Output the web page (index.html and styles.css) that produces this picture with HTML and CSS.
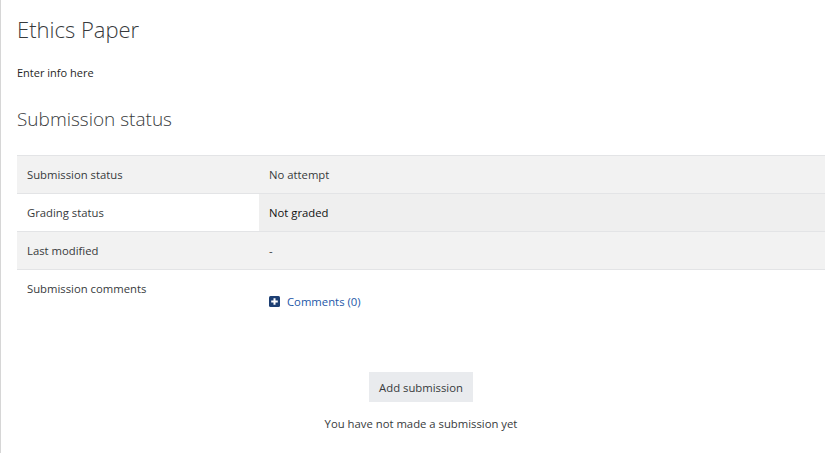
FILE: index.html
```html
<!DOCTYPE html>
<html>
<head>
<meta charset="utf-8">
<link rel="stylesheet" href="styles.css">
</head>
<body>
<div class="page">
  <h2 class="title">Ethics Paper</h2>
  <p class="intro">Enter info here</p>
  <h3 class="heading">Submission status</h3>
  <table class="status">
    <tr class="shade">
      <td class="label">Submission status</td>
      <td class="value">No attempt</td>
    </tr>
    <tr>
      <td class="label white">Grading status</td>
      <td class="value grey dark">Not graded</td>
    </tr>
    <tr class="shade">
      <td class="label">Last modified</td>
      <td class="value">-</td>
    </tr>
    <tr class="plain">
      <td class="label top">Submission comments</td>
      <td class="value comments">
        <a class="comment-link" href="#">
          <svg class="plus" width="11" height="11" viewBox="0 0 11 11"><rect x="0" y="0" width="11" height="11" rx="1.5" fill="#1d3f73"/><path d="M5.5 2.2v6.6M2.2 5.5h6.6" stroke="#fff" stroke-width="2"/></svg>
          <span>Comments (0)</span>
        </a>
      </td>
    </tr>
  </table>
  <div class="actions">
    <button class="btn">Add submission</button>
    <p class="note">You have not made a submission yet</p>
  </div>
</div>
</body>
</html>
```
FILE: styles.css
```css
html, body {
  margin: 0;
  padding: 0;
  background: #fff;
}
body {
  font-family: "Open Sans", "Noto Sans", sans-serif;
  color: #373a3c;
  border-left: 1px solid #d6d6d6;
  min-height: 453px;
  box-sizing: border-box;
}
.page {
  padding: 0 13px 0 16px;
}
.title {
  margin: 0;
  padding-top: 13px;
  font-weight: 300;
  font-size: 22px;
  line-height: 32px;
  color: #373a3c;
}
.intro {
  margin: 20px 0 0;
  font-size: 11px;
  line-height: 16px;
  color: #1f1f1f;
}
.heading {
  margin: 24px 0 0;
  font-weight: 300;
  font-size: 19px;
  line-height: 28px;
  color: #373a3c;
}
.status {
  margin-top: 22px;
  width: 100%;
  border-collapse: collapse;
  font-size: 11.3px;
  color: #373a3c;
}
.status td {
  height: 37px;
  padding: 0 10px;
  border-top: 1px solid #e3e4e6;
  vertical-align: middle;
}
.status .label { width: 222px; }
.shade td { background: #f2f2f2; }
.status tr.shade:last-of-type td { border-bottom: 1px solid #e3e4e6; }
.white { background: #fff; }
.grey { background: #efefef; }
.dark { color: #111; }
.plain td { height: 70px; vertical-align: top; }
.plain .label { padding-top: 11px; }
.comments { padding-top: 24px !important; }
.comment-link {
  display: inline-flex;
  align-items: center;
  gap: 7px;
  color: #1d57a8;
  text-decoration: none;
}
.plus { display: block; }
.actions {
  display: flex;
  flex-direction: column;
  align-items: center;
  padding-top: 8px;
}
.btn {
  font-family: inherit;
  font-size: 11.3px;
  color: #373a3c;
  background: #e9ebee;
  border: 0;
  height: 30px;
  padding: 0 10px;
}
.note {
  margin: 14px 0 0;
  font-size: 11.3px;
  color: #373a3c;
}
```
